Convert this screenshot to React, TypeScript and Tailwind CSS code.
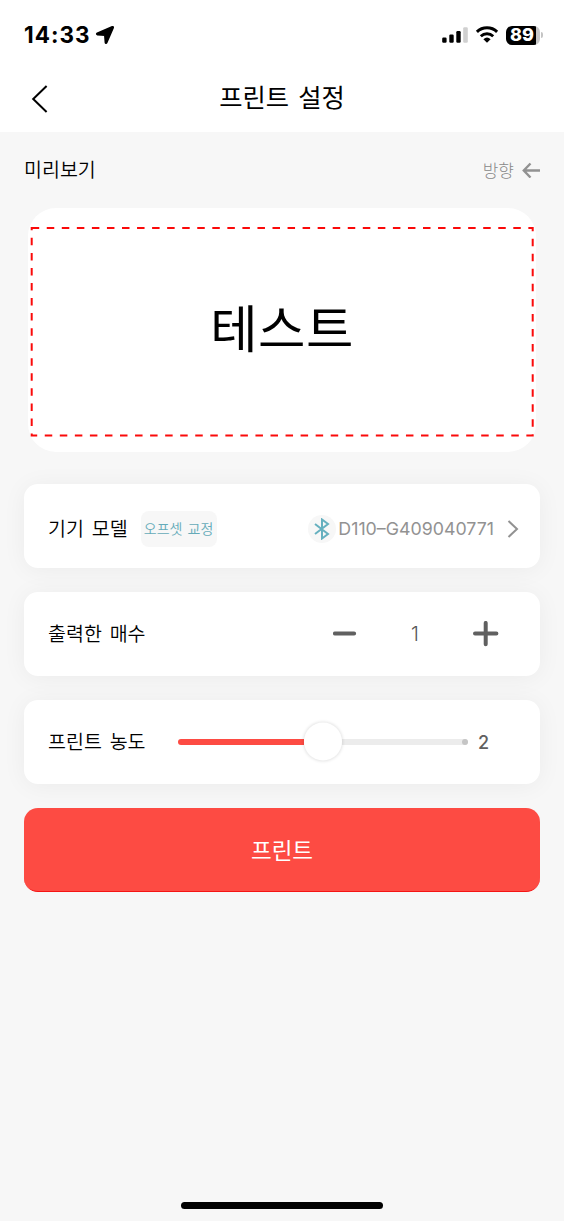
import type { ReactNode } from "react";

function StatusBar() {
  return (
    <div className="flex h-[70px] items-center justify-between pl-[24px] pr-[21px]">
      <div className="flex items-center gap-[5px]">
        <span className="font-['Inter',sans-serif] text-[22.5px] leading-none font-bold tracking-[1px]">14:33</span>
        <svg width="20" height="20" viewBox="0 0 20 20">
          <path
            d="M17.3 1.9 2.3 8.4c-.7.4-.7 1 .1 1.1l7.5.6.6 7.5c.1.8.8.8 1.1.1L18.1 2.7c.2-.6-.2-1-.8-.8Z"
            fill="#000"
            stroke="#000"
            strokeWidth="1.8"
            strokeLinejoin="round"
          />
        </svg>
      </div>
      <div className="flex items-center gap-[7px]">
        <svg width="27" height="18" viewBox="0 0 27 18">
          <rect x="1.2" y="11.5" width="4.4" height="5.3" rx="1.2" />
          <rect x="8.3" y="8.5" width="4.4" height="8.3" rx="1.2" />
          <rect x="15.3" y="5" width="4.4" height="11.8" rx="1.2" />
          <rect x="22.2" y="1.3" width="4.6" height="15.5" rx="1.2" fill="#d0d0d0" />
        </svg>
        <svg width="24" height="18" viewBox="0 0 24 18" fill="none" stroke="#000">
          <path d="M1.9 5.8a14.6 14.6 0 0 1 20.2 0" strokeWidth="3" />
          <path d="M5.8 10.2a9.1 9.1 0 0 1 12.4 0" strokeWidth="2.9" />
          <path d="M8.4 13.2a5.4 5.4 0 0 1 7.2 0L12 16.8Z" fill="#000" stroke="none" />
        </svg>
        <div className="flex items-center gap-[1px]">
          <div className="flex h-[19px] w-[34px] items-center justify-center rounded-[6px] bg-[linear-gradient(90deg,#000_30px,#c8c8c8_30px)] pr-[2px] font-['Inter',sans-serif] text-[18px] leading-none font-extrabold text-white">
            89
          </div>
          <div className="h-[6px] w-[2px] rounded-r-full bg-[#c4c4c4]" />
        </div>
      </div>
    </div>
  );
}

function Card({ children }: { children: ReactNode }) {
  return (
    <section className="flex h-[84px] items-center rounded-[14px] bg-white px-6 shadow-[0_2px_24px_rgba(0,0,0,0.05)]">
      {children}
    </section>
  );
}

function Label({ children }: { children: ReactNode }) {
  return (
    <span className="pb-[2px] text-[19.5px] leading-none font-[350] whitespace-nowrap text-black [word-spacing:3.5px]">
      {children}
    </span>
  );
}

export default function App() {
  return (
    <main className="flex h-[1221px] w-[564px] flex-col bg-[#f7f7f7] font-['Noto_Sans_CJK_KR',sans-serif] text-black">
      <header className="h-[132px] shrink-0 bg-white">
        <StatusBar />
        <div className="grid h-[57px] grid-cols-[80px_1fr_80px] items-center">
          <button className="pl-[31px]" aria-label="뒤로">
            <svg width="18" height="28" viewBox="0 0 18 28" fill="none" stroke="#000" strokeWidth="2">
              <path d="M15.6 1 2.2 14l13.4 13" />
            </svg>
          </button>
          <h1 className="pb-[4px] text-center text-[25.3px] leading-none font-normal [word-spacing:3.5px]">프린트 설정</h1>
        </div>
      </header>

      <div className="flex h-[76px] shrink-0 items-center justify-between px-6">
        <Label>미리보기</Label>
        <div className="flex items-center gap-[8px] text-[17px] leading-none font-light text-[#888]">
          <span className="pb-[2px]">방향</span>
          <svg width="18" height="16" viewBox="0 0 18 16" fill="none" stroke="#929292" strokeWidth="2.4">
            <path d="M8.5 1.5 1.8 8.5l6.7 7M2 8.5h16" />
          </svg>
        </div>
      </div>

      <div className="mx-[28px] grid h-[244px] shrink-0 place-items-center rounded-[28px] bg-white">
        <svg className="col-start-1 row-start-1" width="508" height="244" viewBox="0 0 508 244">
          <rect x="3.7" y="20" width="501" height="207.5" fill="none" stroke="#fa0a0a" strokeWidth="2" strokeDasharray="7.5 7.55" />
        </svg>
        <span className="col-start-1 row-start-1 pb-[9px] text-[51.5px] leading-none tracking-[0.4px]">테스트</span>
      </div>

      <div className="mt-8 flex flex-col gap-6 px-6">
        <Card>
          <div className="flex flex-1 items-center pt-[5px]">
            <Label>기기 모델</Label>
            <button className="ml-[13px] flex h-[36px] w-[76px] items-center justify-center rounded-[8px] bg-[#f7f7f7] pb-[2px] text-[14px] leading-none font-[350] whitespace-nowrap text-[#65abb9] [word-spacing:2px]">
              오프셋 교정
            </button>
            <div className="-mr-[3px] ml-auto flex items-center">
              <div className="flex size-[28px] items-center justify-center rounded-full bg-[#f7f7f7]">
                <svg width="16" height="22" viewBox="0 0 16 22" fill="none" stroke="#65b0bf" strokeWidth="2">
                  <path d="m1 6 13 10-6 4.5v-19L14 6 1 16" />
                </svg>
              </div>
              <span className="ml-[2px] font-['Inter',sans-serif] text-[17.8px] leading-none text-[#929292]">D110–G409040771</span>
              <svg className="ml-[13px]" width="12" height="18" viewBox="0 0 12 18" fill="none" stroke="#929292" strokeWidth="2">
                <path d="m1.5 1 8.5 8-8.5 8" />
              </svg>
            </div>
          </div>
        </Card>

        <Card>
          <Label>출력한 매수</Label>
          <div className="mr-[17px] ml-auto flex items-center">
            <svg width="24" height="26" viewBox="0 0 24 26" fill="none" stroke="#606060" strokeWidth="4" strokeLinecap="round">
              <path d="M1.9 12.5h19.2" />
            </svg>
            <span className="w-[116px] text-center font-['Inter',sans-serif] text-[20px] leading-none font-light text-[#555]">1</span>
            <svg width="26" height="26" viewBox="0 0 26 26" fill="none" stroke="#606060" strokeWidth="4" strokeLinecap="round">
              <path d="M2 12.5h21.4M12.7 1.9v21.4" />
            </svg>
          </div>
        </Card>

        <Card>
          <Label>프린트 농도</Label>
          <div className="ml-auto flex h-[40px] w-[290px] items-center">
            <div className="h-[6px] w-[126px] rounded-l-full bg-[#fd4b43]" />
            <div className="size-[38px] shrink-0 -translate-y-[0.5px] rounded-full bg-white shadow-[0_0_3px_1px_rgba(0,0,0,0.1)]" />
            <div className="flex h-[6px] flex-1 justify-end rounded-r-full bg-[#ececec]">
              <span className="size-[6px] rounded-full bg-[#c5c5c5]" />
            </div>
          </div>
          <span className="mr-[27px] ml-[10px] pt-[1px] font-['Inter',sans-serif] text-[18px] leading-none font-medium text-[#606060]">2</span>
        </Card>

        <button className="h-[84px] rounded-[14px] border-b border-[#f51414] bg-[#fd4b43] pb-[1px] text-[22.5px] leading-none text-white">
          프린트
        </button>
      </div>

      <div className="mx-auto mt-auto mb-[12px] h-[7px] w-[202px] shrink-0 rounded-full bg-black" />
    </main>
  );
}
